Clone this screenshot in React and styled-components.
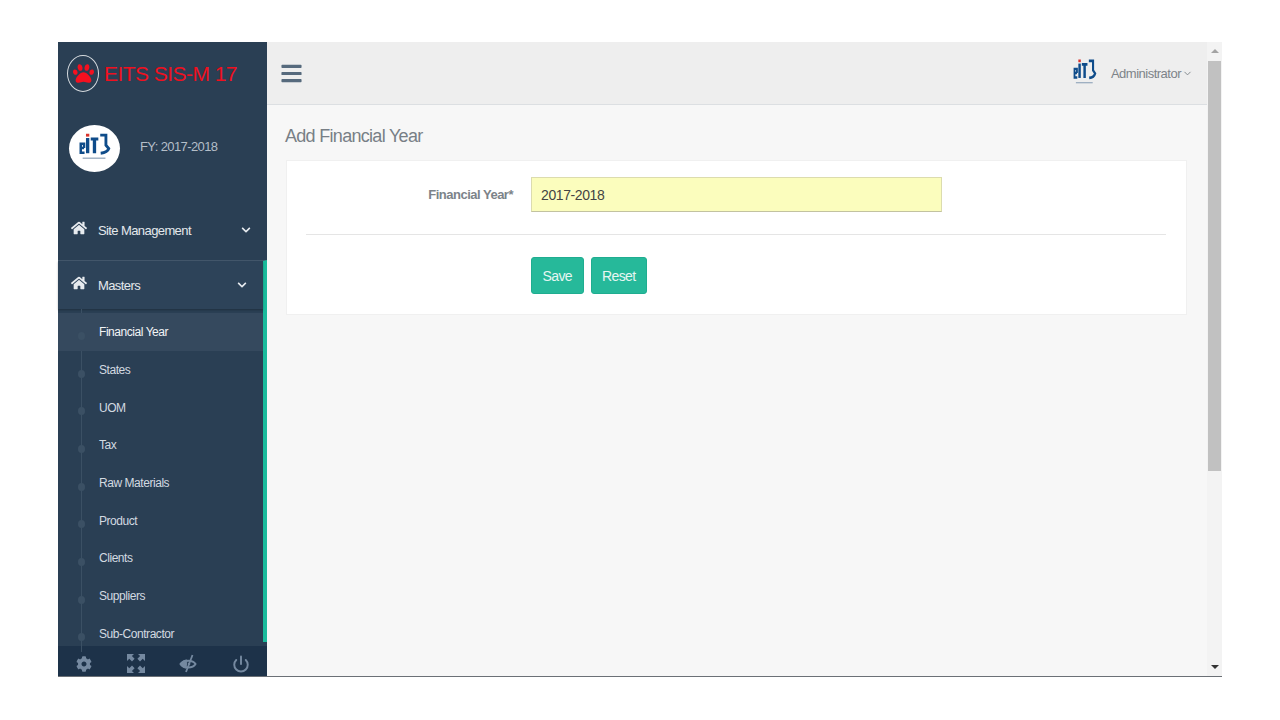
import React from 'react';
import styled, { createGlobalStyle } from 'styled-components';
import { FaPaw, FaHome, FaChevronDown, FaCog, FaBars } from 'react-icons/fa';
import { FiChevronDown, FiPower } from 'react-icons/fi';

const menuItems = [
  'Financial Year',
  'States',
  'UOM',
  'Tax',
  'Raw Materials',
  'Product',
  'Clients',
  'Suppliers',
  'Sub-Contractor',
];

function EitsLogo({ width, height }) {
  return (
    <svg width={width} height={height} viewBox="0 0 40 40" preserveAspectRatio="none">
      <path d="M4.500 20h4M9 25H5v-9.500h3.500V20" fill="none" stroke="#0f4c8a" strokeWidth="2.600" />
      <rect x="10.500" y="5" width="3.500" height="3" fill="#d9342b" />
      <rect x="10.500" y="9.500" width="3.500" height="16" fill="#0f4c8a" />
      <path d="M15.500 9h8v3h-2.300v13.500h-3.500V12h-2.200z" fill="#0f4c8a" />
      <path d="M25.500 6.500h6v10.500l3 3.500c-1 3-4 4.500-8.500 5" fill="none" stroke="#0f4c8a" strokeWidth="3" />
      <rect x="7" y="30" width="24" height="1.500" fill="#9fb0c2" />
    </svg>
  );
}

function FullscreenIcon() {
  return (
    <svg width="18" height="19" viewBox="0 0 18 19" fill="#7589a0">
      <path d="M0 0h7L4.900 2.100 7.600 4.800 5 7.400 2.300 4.700 0 7z" />
      <path d="M18 0h-7l2.100 2.100-2.700 2.700L13 7.400l2.700-2.700L18 7z" />
      <path d="M0 19h7l-2.100-2.100 2.700-2.700L5 11.600l-2.700 2.700L0 12z" />
      <path d="M18 19h-7l2.100-2.100-2.700-2.700 2.600-2.600 2.700 2.700L18 12z" />
    </svg>
  );
}

function EyeCloseIcon() {
  return (
    <svg width="18" height="19" viewBox="0 0 18 19" fill="none" stroke="#7589a0">
      <path d="M1.500 10C4 5.500 14 5.500 16.500 10 14 14.500 4 14.500 1.500 10z" strokeWidth="2" />
      <path d="M1.500 10C3 7 5.500 6 8 6l-1 8c-2 0-4-1.500-5.500-4z" fill="#7589a0" strokeWidth="1" />
      <path d="M13.500 1L7 18" strokeWidth="1.800" />
      <circle cx="10" cy="10" r="1.300" fill="#7589a0" strokeWidth="0" />
    </svg>
  );
}

function App() {
  return (
    <Page>
      <GlobalStyle />
      <Sidebar>
        <Brand>
          <PawRing>
            <FaPaw />
          </PawRing>
          <BrandName>EITS SIS-M 17</BrandName>
        </Brand>
        <Profile>
          <Avatar>
            <EitsLogo width={38} height={38} />
          </Avatar>
          <FyLabel>FY: 2017-2018</FyLabel>
        </Profile>
        <Nav>
          <NavRow>
            <FaHome />
            <NavLabel>Site Management</NavLabel>
            <FaChevronDown />
          </NavRow>
          <OpenGroup>
            <OpenRow>
              <FaHome />
              <NavLabel>Masters</NavLabel>
              <FaChevronDown />
            </OpenRow>
            <SubMenu>
              {menuItems.map((item, i) => (
                <SubItem key={item} $active={i === 0}>
                  {item}
                </SubItem>
              ))}
            </SubMenu>
          </OpenGroup>
        </Nav>
        <SidebarFooter>
          <FaCog color="#7589a0" size={16} />
          <FullscreenIcon />
          <EyeCloseIcon />
          <FiPower color="#7589a0" size={18} strokeWidth={2.6} />
        </SidebarFooter>
      </Sidebar>

      <Main>
        <TopBar>
          <Burger>
            <FaBars />
          </Burger>
          <UserBox>
            <EitsLogo width={28} height={36} />
            <UserName>Administrator</UserName>
            <FiChevronDown size={11} color="#7d8389" />
          </UserBox>
        </TopBar>
        <Content>
          <PageTitle>Add Financial Year</PageTitle>
          <Card>
            <FormRow>
              <FieldLabel>Financial Year*</FieldLabel>
              <YearInput defaultValue="2017-2018" />
            </FormRow>
            <Divider />
            <ButtonRow>
              <GreenButton>Save</GreenButton>
              <GreenButton>Reset</GreenButton>
            </ButtonRow>
          </Card>
        </Content>
      </Main>

      <Scrollbar>
        <ArrowUp />
        <Thumb />
        <ArrowDown />
      </Scrollbar>
    </Page>
  );
}

const GlobalStyle = createGlobalStyle`
  html, body {
    margin: 0;
    padding: 0;
    background: #fff;
    overflow: hidden;
  }
  * {
    box-sizing: border-box;
  }
`;

const Page = styled.div`
  display: flex;
  width: 1164px;
  height: 635px;
  margin: 42px 0 0 58px;
  font-family: 'Liberation Sans', Arial, sans-serif;
  border-bottom: 1px solid #6b7076;
`;

const Sidebar = styled.aside`
  display: flex;
  flex-direction: column;
  width: 209px;
  flex: none;
  background: #2a3f54;
`;

const Brand = styled.div`
  display: flex;
  align-items: center;
  height: 62px;
  padding: 0 0 0 9px;
`;

const PawRing = styled.div`
  display: flex;
  align-items: center;
  justify-content: center;
  width: 32px;
  height: 37px;
  border: 1.500px solid #d5dade;
  border-radius: 50%;
  color: #f5101f;
  font-size: 21px;
`;

const BrandName = styled.span`
  margin: 2px 0 0 5px;
  font-size: 21px;
  letter-spacing: -0.55px;
  color: #f0101f;
  white-space: nowrap;
`;

const Profile = styled.div`
  display: flex;
  align-items: center;
  height: 62px;
  margin-top: 13px;
  padding-left: 11px;
`;

const Avatar = styled.div`
  display: flex;
  align-items: center;
  justify-content: center;
  width: 51px;
  height: 47px;
  background: #fff;
  border-radius: 50%;
`;

const FyLabel = styled.span`
  margin-left: 20px;
  margin-top: -4px;
  font-size: 13px;
  letter-spacing: -0.6px;
  color: #b4bec8;
`;

const Nav = styled.nav`
  display: flex;
  flex-direction: column;
  flex: 1;
  margin-top: 21px;
  min-height: 0;
`;

const NavRow = styled.div`
  display: flex;
  align-items: center;
  height: 60px;
  flex: none;
  padding: 0 16px 0 13px;
  color: #e7ebef;

  svg:first-child {
    font-size: 16px;
    margin-top: -4px;
  }
  svg:last-child {
    font-size: 10px;
  }
`;

const OpenRow = styled(NavRow)`
  height: 48px;
  background: #2d4359;
  box-shadow: 0 1px 2px rgba(0, 0, 0, 0.25);
`;

const NavLabel = styled.span`
  flex: 1;
  margin-left: 11px;
  font-size: 13px;
  letter-spacing: -0.6px;
  color: #e4e8ec;
`;

const OpenGroup = styled.div`
  display: flex;
  flex-direction: column;
  height: 382px;
  flex: none;
  border-top: 1px solid #44586c;
  border-right: 4px solid #1abb9c;
  background: #2a3f54;
`;

const SubMenu = styled.div`
  position: relative;
  display: flex;
  flex-direction: column;
  padding-top: 4px;

  &::before {
    content: '';
    position: absolute;
    left: 23px;
    top: 0;
    bottom: 0;
    width: 1px;
    background: #3b5064;
  }
`;

const SubItem = styled.div`
  position: relative;
  display: flex;
  align-items: center;
  height: 37.7px;
  padding: 1px 0 0 41px;
  font-size: 12px;
  letter-spacing: -0.45px;
  color: ${(props) => (props.$active ? '#f2f4f6' : '#d3dae1')};
  background: ${(props) => (props.$active ? '#35495e' : 'transparent')};

  &::before {
    content: '';
    position: absolute;
    left: 20px;
    top: 50%;
    width: 7px;
    height: 8px;
    margin-top: 0;
    border-radius: 50%;
    background: #3b5064;
  }
`;

const SidebarFooter = styled.div`
  display: flex;
  align-items: center;
  justify-content: space-between;
  height: 30px;
  flex: none;
  padding: 5px 17px 0 18px;
  background: #1d3249;
`;

const Main = styled.main`
  display: flex;
  flex-direction: column;
  flex: 1;
  min-width: 0;
  background: #f7f7f7;
`;

const TopBar = styled.header`
  display: flex;
  align-items: center;
  justify-content: space-between;
  height: 63px;
  flex: none;
  padding: 0 14px 0 13px;
  background: #eeeeee;
  border-bottom: 1px solid #dcdfe2;
`;

const Burger = styled.div`
  display: flex;
  color: #566a7d;
  font-size: 23px;
`;

const UserBox = styled.div`
  display: flex;
  align-items: center;
`;

const UserName = styled.span`
  margin: 0 1px 0 12px;
  font-size: 13px;
  letter-spacing: -0.5px;
  color: #7d8389;
`;

const Content = styled.div`
  display: flex;
  flex-direction: column;
  padding: 21px 20px 0 18px;
`;

const PageTitle = styled.h3`
  margin: 0 0 13px;
  font-size: 18px;
  font-weight: 400;
  letter-spacing: -0.7px;
  line-height: 21px;
  color: #787f86;
`;

const Card = styled.section`
  display: flex;
  flex-direction: column;
  height: 155px;
  margin-left: 1px;
  padding: 16px 20px 0 19px;
  background: #fff;
  border: 1px solid #f0f0f0;
`;

const FormRow = styled.div`
  display: flex;
  align-items: center;
`;

const FieldLabel = styled.label`
  width: 207px;
  flex: none;
  text-align: right;
  font-size: 13px;
  font-weight: 700;
  letter-spacing: -0.5px;
  color: #7c8389;
`;

const YearInput = styled.input`
  width: 411px;
  height: 35px;
  margin-left: 18px;
  padding: 0 9px;
  font-family: inherit;
  font-size: 14px;
  letter-spacing: -0.4px;
  color: #444;
  background: #fbfdbd;
  border: 1px solid #dcdcae;
  border-bottom-color: #c2c2a0;
  outline: none;
`;

const Divider = styled.hr`
  width: 100%;
  height: 1px;
  margin: 22px 0 22px;
  border: 0;
  background: #e5e5e5;
`;

const ButtonRow = styled.div`
  display: flex;
  gap: 7px;
  margin-left: 225px;
`;

const GreenButton = styled.button`
  height: 37px;
  padding: 0 10.5px;
  font-family: inherit;
  font-size: 14px;
  letter-spacing: -0.6px;
  color: #e6f6f2;
  background: #26b99a;
  border: 1px solid #1fad90;
  border-radius: 3px;
`;

const Scrollbar = styled.div`
  display: flex;
  flex-direction: column;
  align-items: center;
  width: 15px;
  flex: none;
  padding: 7px 0 7px;
  background: #f3f3f3;
`;

const ArrowUp = styled.div`
  width: 0;
  height: 0;
  border-left: 4px solid transparent;
  border-right: 4px solid transparent;
  border-bottom: 4px solid #a3a3a3;
`;

const ArrowDown = styled.div`
  width: 0;
  height: 0;
  margin-top: auto;
  border-left: 4px solid transparent;
  border-right: 4px solid transparent;
  border-top: 4px solid #333;
`;

const Thumb = styled.div`
  width: 13px;
  height: 410px;
  margin-top: 8px;
  background: #c1c1c1;
`;

export default App;
